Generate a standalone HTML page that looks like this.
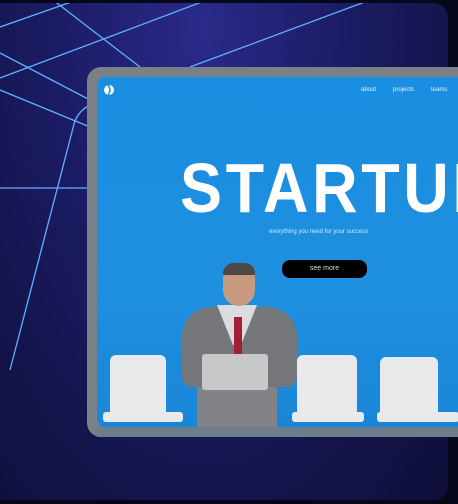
<!DOCTYPE html>
<html><head><style>
html,body{margin:0;padding:0;width:458px;height:504px;overflow:hidden;background:#07071a;font-family:"Liberation Sans",sans-serif}
.card{position:absolute;left:0;top:3px;width:448px;height:497px;border-radius:0 14px 14px 0;background:radial-gradient(ellipse at 45% 5%,#2a2a8a 0%,#1c1c66 40%,#131349 75%,#0f0f3a 100%);overflow:hidden}
.frame{position:absolute;left:87px;top:67px;width:400px;height:370px;border-radius:14px;background:#7b7f86}
.screen{position:absolute;left:97px;top:77px;width:380px;height:350px;border-radius:8px 0 0 8px;background:linear-gradient(180deg,#1a8ee0 0%,#1f8fdf 60%,#1a86d8 100%);overflow:hidden}
.nav{position:absolute;top:10px;font-size:6px;color:#e8f2ff}
.title{position:absolute;left:83px;top:76px;font-size:70px;line-height:70px;font-weight:bold;color:#fff;letter-spacing:4px;white-space:nowrap;transform:scaleX(0.9);transform-origin:left top}
.sub{position:absolute;left:172px;top:152px;font-size:6px;color:#cfe6fb}
.btn{position:absolute;left:185px;top:183px;width:85px;height:18px;border-radius:8px;background:#000;color:#ddd;font-size:7px;text-align:center;line-height:18px}
.chair{position:absolute;background:#e8e9eb;border-radius:6px 6px 2px 2px}
</style></head><body>
<div class="card">
<svg width="458" height="504" style="position:absolute;left:0;top:-3px" fill="none" stroke="#5fb0ff" stroke-width="1.3">
<line x1="0" y1="27" x2="77" y2="0"/>
<line x1="53" y1="0" x2="140" y2="67"/>
<line x1="0" y1="78" x2="207" y2="0"/>
<line x1="190" y1="67" x2="370" y2="0"/>
<line x1="0" y1="53" x2="90" y2="100"/>
<line x1="0" y1="90" x2="90" y2="127"/>
<line x1="0" y1="188" x2="90" y2="188"/>
<path d="M90 105 Q76 112 73 128 L10 370"/>
</svg>
</div>
<div class="frame"></div>
<div class="screen">
<svg width="14" height="14" style="position:absolute;left:5px;top:6px"><circle cx="7" cy="7" r="5" fill="#fff"/><path d="M6 2 Q10 7 6 12" stroke="#1a8ee0" stroke-width="1.5" fill="none"/></svg>
<div class="nav" style="left:264px">about</div>
<div class="nav" style="left:296px">projects</div>
<div class="nav" style="left:334px">teams</div>
<div class="title">STARTUP</div>
<div class="sub">everything you need for your success</div>
<div class="btn">see more</div>
<div class="chair" style="left:13px;top:278px;width:56px;height:62px"></div>
<div class="chair" style="left:6px;top:335px;width:80px;height:10px;border-radius:3px"></div>
<div class="chair" style="left:126px;top:335px;width:30px;height:10px"></div>
<div class="chair" style="left:200px;top:278px;width:60px;height:62px"></div>
<div class="chair" style="left:195px;top:335px;width:72px;height:10px;border-radius:3px"></div>
<div class="chair" style="left:283px;top:280px;width:58px;height:60px"></div>
<div class="chair" style="left:280px;top:335px;width:82px;height:10px;border-radius:3px"></div>
<div style="position:absolute;left:85px;top:230px;width:115px;height:80px;background:#75767a;border-radius:30px 30px 10px 10px"></div>
<div style="position:absolute;left:120px;top:228px;width:40px;height:40px;background:#dcdcdf;clip-path:polygon(0 0,100% 0,60% 100%,40% 100%)"></div>
<div style="position:absolute;left:137px;top:240px;width:8px;height:40px;background:#a21f36"></div>
<div style="position:absolute;left:100px;top:310px;width:80px;height:40px;background:#828387"></div>
<div style="position:absolute;left:126px;top:187px;width:32px;height:42px;background:#c89a80;border-radius:14px 14px 16px 16px"></div>
<div style="position:absolute;left:126px;top:186px;width:32px;height:12px;background:#4b4845;border-radius:14px 14px 2px 2px"></div>
<div style="position:absolute;left:105px;top:277px;width:66px;height:36px;background:#c7c8ca;border-radius:3px"></div>
</div>
<div style="position:absolute;left:97px;top:427px;width:361px;height:10px;background:#6d7d8a"></div>
</body></html>
